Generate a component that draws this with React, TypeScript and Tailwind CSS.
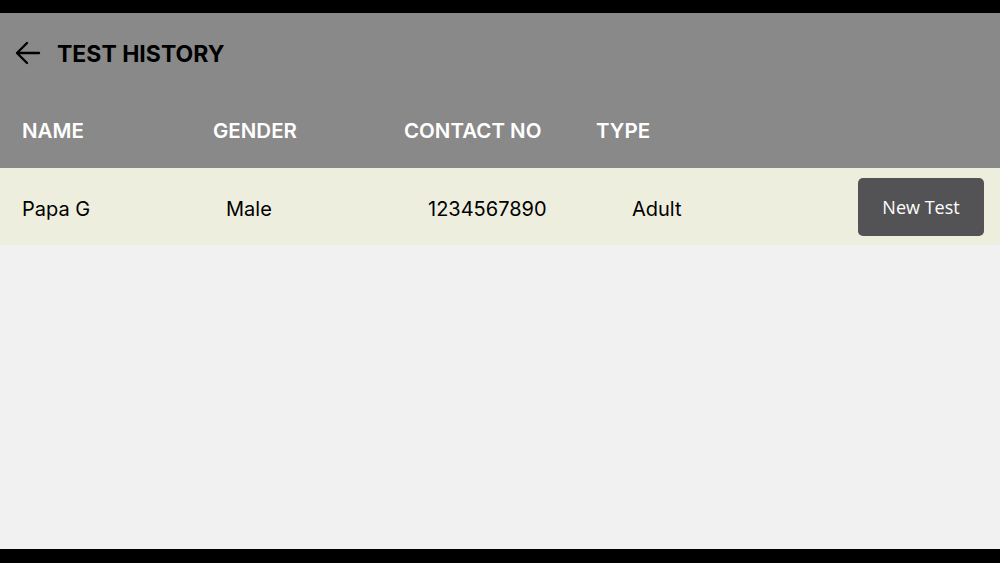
import React from "react";

export default function App() {
  return (
    <div className="w-[1000px] h-[563px] bg-black flex flex-col pt-[13px] pb-[14px]" style={{ fontFamily: "Inter, 'Open Sans', sans-serif" }}>
      <div className="bg-[#898989] h-[155px] flex flex-col">
        <div className="h-[80px] flex items-center pl-[15px]">
          <svg width="26" height="24" viewBox="0 0 26 24" fill="none" stroke="#000" strokeWidth="2.4" strokeLinecap="round" strokeLinejoin="round">
            <path d="M24 12H2.5" />
            <path d="M12 2L2 12l10 10" />
          </svg>
          <span className="ml-[16px] text-[23px] font-bold text-black pt-[2px]">TEST HISTORY</span>
        </div>
        <div className="flex-1 flex items-center pl-[22px] text-white text-[20.5px] font-semibold pt-[2px]">
          <div className="w-[191px]">NAME</div>
          <div className="w-[191px]">GENDER</div>
          <div className="w-[192px]">CONTACT NO</div>
          <div>TYPE</div>
        </div>
      </div>
      <div className="bg-[#eeeedf] h-[77px] flex items-center pl-[22px] pr-[16px] text-[20px] text-black">
        <div className="w-[204px] pt-[5px]">Papa G</div>
        <div className="w-[202px] pt-[5px]">Male</div>
        <div className="w-[204px] pt-[5px]">1234567890</div>
        <div className="flex-1 pt-[5px]">Adult</div>
        <button className="w-[126px] h-[58px] rounded-[5px] bg-[#535355] text-white text-[18px] font-medium pt-[2px]" style={{ fontFamily: "'Open Sans', sans-serif" }}>New Test</button>
      </div>
      <div className="flex-1 bg-[#f1f1f1]" />
    </div>
  );
}
